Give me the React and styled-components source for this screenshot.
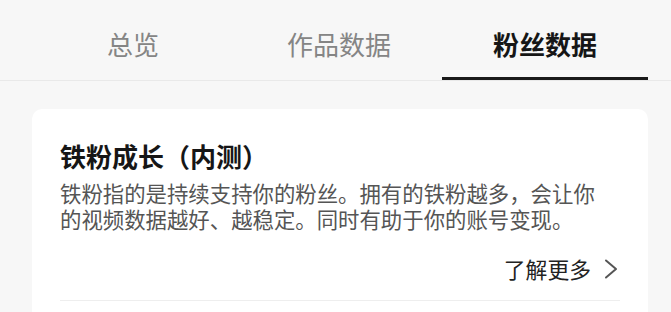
import React from 'react';
import styled, { createGlobalStyle } from 'styled-components';

const GlobalStyle = createGlobalStyle`
  html, body {
    margin: 0;
    padding: 0;
    background: #f7f7f7;
  }
  body {
    font-family: "Noto Sans CJK SC", "Noto Sans", sans-serif;
    text-spacing-trim: space-all;
  }
`;

const Page = styled.div`
  width: 671px;
  min-height: 312px;
  background: #f7f7f7;
  overflow: hidden;
`;

const TabBar = styled.div`
  display: flex;
  height: 80px;
  padding-left: 30px;
  border-bottom: 1px solid #e9e9e9;
`;

const Tab = styled.div`
  width: 206px;
  height: 80px;
  display: flex;
  flex-direction: column;
  align-items: center;
`;

const TabLabel = styled.span`
  padding-top: 30px;
  font-size: 26px;
  line-height: 28px;
  font-weight: ${p => (p.$active ? 700 : 400)};
  color: ${p => (p.$active ? '#161616' : '#858585')};
`;

const Indicator = styled.div`
  margin-top: auto;
  width: 100%;
  height: 3px;
  background: ${p => (p.$active ? '#1a1a1a' : 'transparent')};
`;

const Card = styled.div`
  margin: 28px 23px 0 32px;
  padding: 29px 28px 20px;
  background: #ffffff;
  border-radius: 10px 10px 0 0;
`;

const Title = styled.h2`
  margin: 0;
  font-size: 26px;
  line-height: 36px;
  font-weight: 700;
  color: #161616;
`;

const Description = styled.p`
  margin: 6px 0 0;
  font-size: 21.4px;
  line-height: 26px;
  color: #555555;
`;

const Line = styled.span`
  display: block;
  white-space: nowrap;
`;

const LinkRow = styled.div`
  display: flex;
  justify-content: flex-end;
  align-items: center;
  gap: 13px;
  margin-top: 22px;
  padding: 0 2px 16px 0;
  border-bottom: 1px solid #eeeeee;
`;

const LinkText = styled.span`
  font-size: 21.8px;
  line-height: 30px;
  color: #222222;
`;

const Chevron = () => (
  <svg width="14" height="20" viewBox="0 0 14 20" fill="none">
    <path d="M2 1.5 L12 10 L2 18.5" stroke="#555" strokeWidth="2" strokeLinecap="round" strokeLinejoin="round" />
  </svg>
);

const tabs = ['总览', '作品数据', '粉丝数据'];

const App = () => (
  <Page>
    <GlobalStyle />
    <TabBar>
      {tabs.map((t, i) => (
        <Tab key={t}>
          <TabLabel $active={i === 2}>{t}</TabLabel>
          <Indicator $active={i === 2} />
        </Tab>
      ))}
    </TabBar>
    <Card>
      <Title>铁粉成长（内测）</Title>
      <Description>
        <Line>铁粉指的是持续支持你的粉丝。拥有的铁粉越多，会让你</Line>
        <Line>的视频数据越好、越稳定。同时有助于你的账号变现。</Line>
      </Description>
      <LinkRow>
        <LinkText>了解更多</LinkText>
        <Chevron />
      </LinkRow>
    </Card>
  </Page>
);

export default App;
